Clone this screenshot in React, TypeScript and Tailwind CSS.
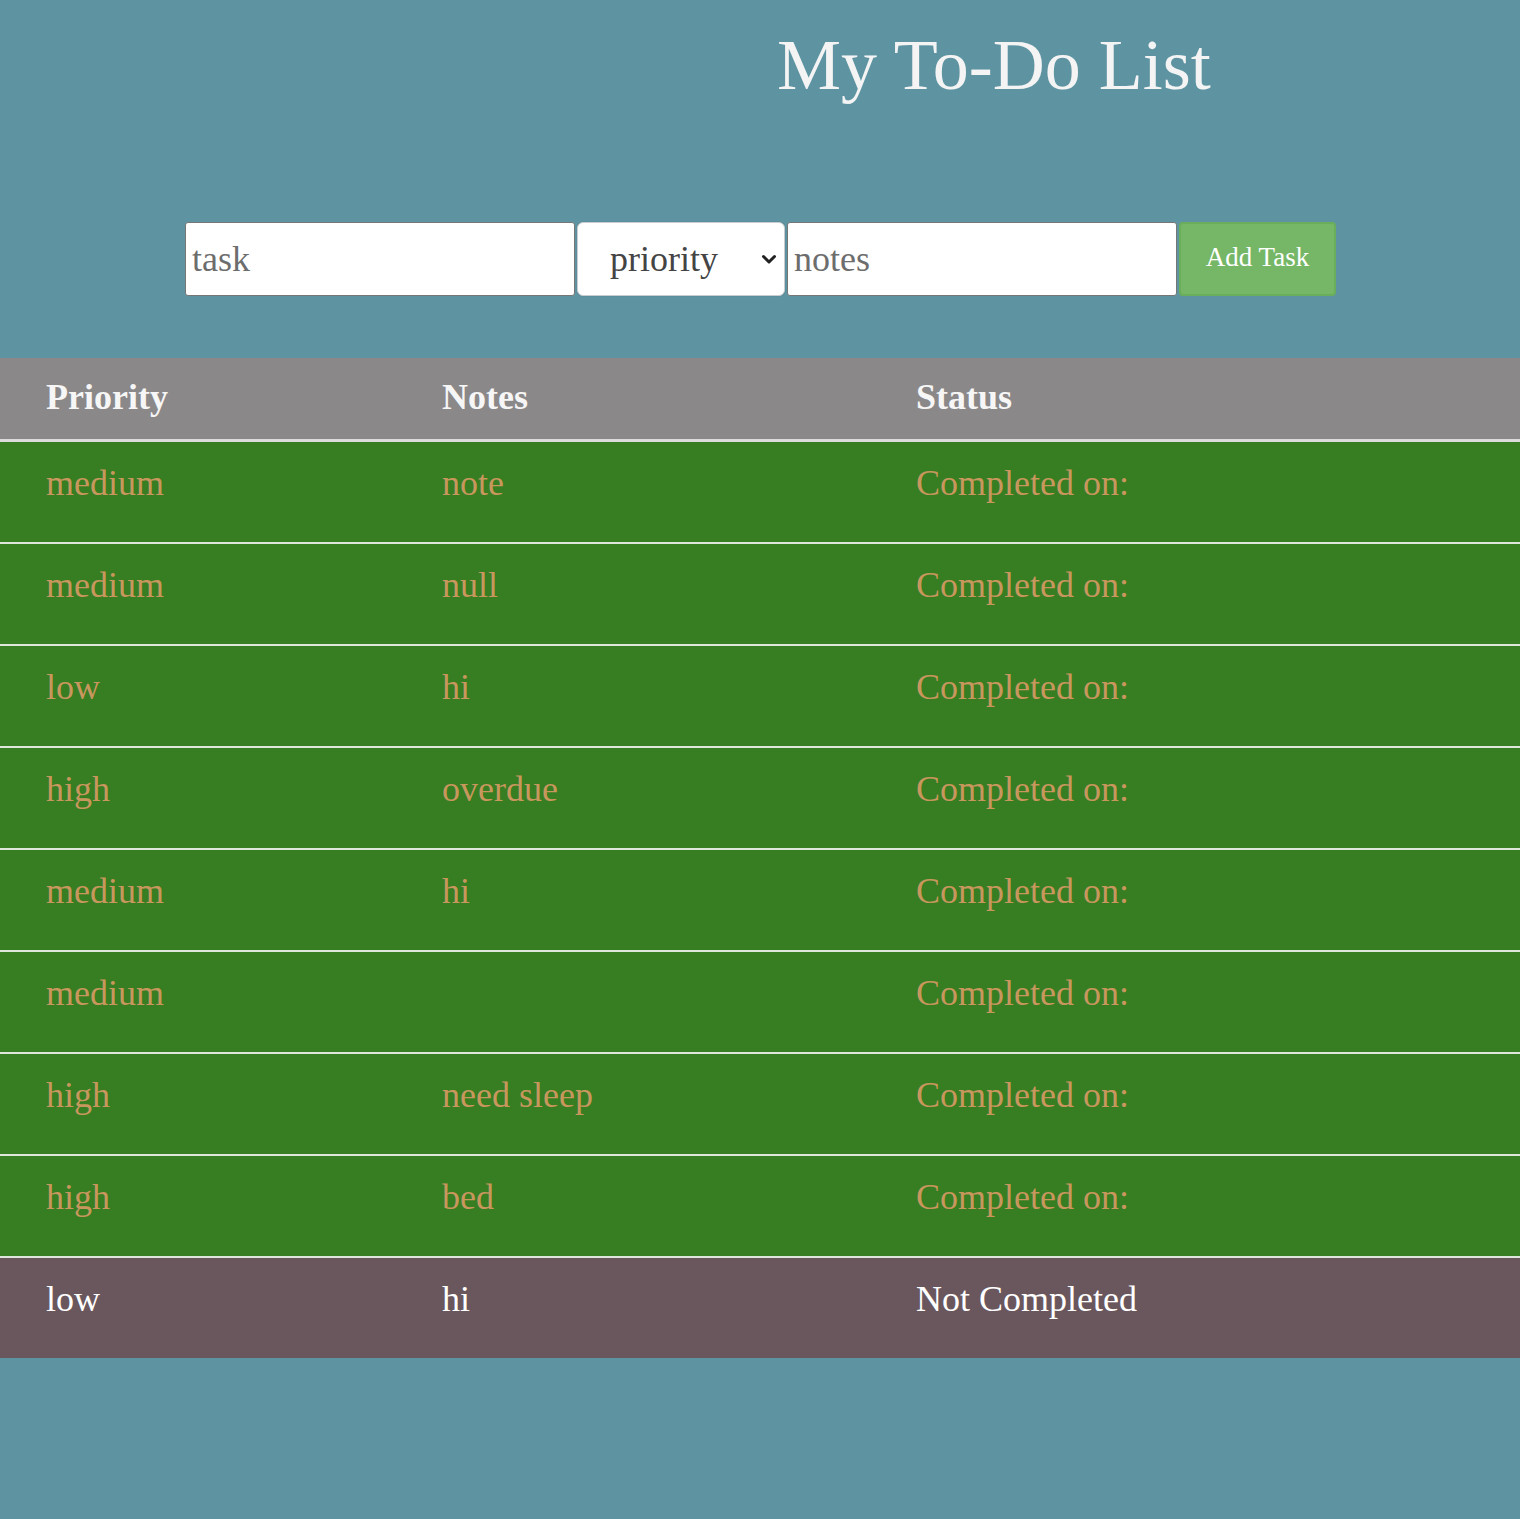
import { useState } from 'react';

interface Task {
    priority: string;
    notes: string;
    done: boolean;
}

const tasks: Task[] = [
    { priority: "medium", notes: "note", done: true },
    { priority: "medium", notes: "null", done: true },
    { priority: "low", notes: "hi", done: true },
    { priority: "high", notes: "overdue", done: true },
    { priority: "medium", notes: "hi", done: true },
    { priority: "medium", notes: "", done: true },
    { priority: "high", notes: "need sleep", done: true },
    { priority: "high", notes: "bed", done: true },
    { priority: "low", notes: "hi", done: false },
];

export default function App() {
    const [task, setTask] = useState("");
    const [priority, setPriority] = useState("");
    const [notes, setNotes] = useState("");

    return (
        <div className="min-h-[1519px] bg-[#5e94a2] font-['Liberation_Serif',_'Times_New_Roman',_serif]">
            {/* Header */}
            <h1 className="pt-[24px] pl-[777px] text-[72px] leading-[82px] text-[#f4f4f4]">My To-Do List</h1>

            {/* Form */}
            <form
                className="mt-[116px] flex items-stretch gap-[2px] pl-[185px] h-[74px]"
                onSubmit={(e) => e.preventDefault()}
            >
                <input
                    value={task}
                    onChange={(e) => setTask(e.target.value)}
                    placeholder="task"
                    className="w-[390px] bg-white border border-[#767676] rounded-[3px] px-[6px] text-[36px] text-[#333] placeholder:text-[#6d6d6d] outline-none"
                />
                <div className="relative w-[208px]">
                    <select
                        value={priority}
                        onChange={(e) => setPriority(e.target.value)}
                        className="appearance-none w-full h-full bg-white border border-[#c9cdd0] rounded-[6px] pl-[32px] text-[36px] text-[#444] outline-none shadow-[0_0_1px_rgba(0,0,0,0.3)]"
                    >
                        <option value="">priority</option>
                        <option value="low">low</option>
                        <option value="medium">medium</option>
                        <option value="high">high</option>
                    </select>
                    <svg
                        className="pointer-events-none absolute right-[8px] top-[32px]"
                        width="16"
                        height="11"
                        viewBox="0 0 16 11"
                    >
                        <path d="M2.5 2.5l5.5 5.5 5.5-5.5" fill="none" stroke="#222" strokeWidth="3" strokeLinecap="round" strokeLinejoin="round" />
                    </svg>
                </div>
                <input
                    value={notes}
                    onChange={(e) => setNotes(e.target.value)}
                    placeholder="notes"
                    className="w-[390px] bg-white border border-[#767676] rounded-[3px] px-[6px] text-[36px] text-[#333] placeholder:text-[#6d6d6d] outline-none"
                />
                <button
                    type="submit"
                    className="w-[157px] bg-[#75b766] border-2 border-[#6aae5b] rounded-[4px] text-[27px] text-white pb-[4px]"
                >
                    Add Task
                </button>
            </form>

            {/* Table */}
            <div className="mt-[62px] text-[36px]">
                <div className="grid grid-cols-[396px_474px_1fr] h-[84px] bg-[#8b8889] border-b-[3px] border-[#dcdcdc] pl-[46px] pt-[12px] font-bold text-[#f6f6f6]">
                    <div>Priority</div>
                    <div>Notes</div>
                    <div>Status</div>
                </div>
                {tasks.map((t, i) => (
                    <div
                        key={i}
                        className={`grid grid-cols-[396px_474px_1fr] pl-[46px] pt-[14px] ${t.done
                            ? 'h-[102px] bg-[#377d22] border-b-2 border-[#dfe6dc] text-[#c8975d]'
                            : 'h-[100px] bg-[#6a575d] text-white'
                            }`}
                    >
                        <div>{t.priority}</div>
                        <div>{t.notes}</div>
                        <div>{t.done ? 'Completed on:' : 'Not Completed'}</div>
                    </div>
                ))}
            </div>
        </div>
    );
}
